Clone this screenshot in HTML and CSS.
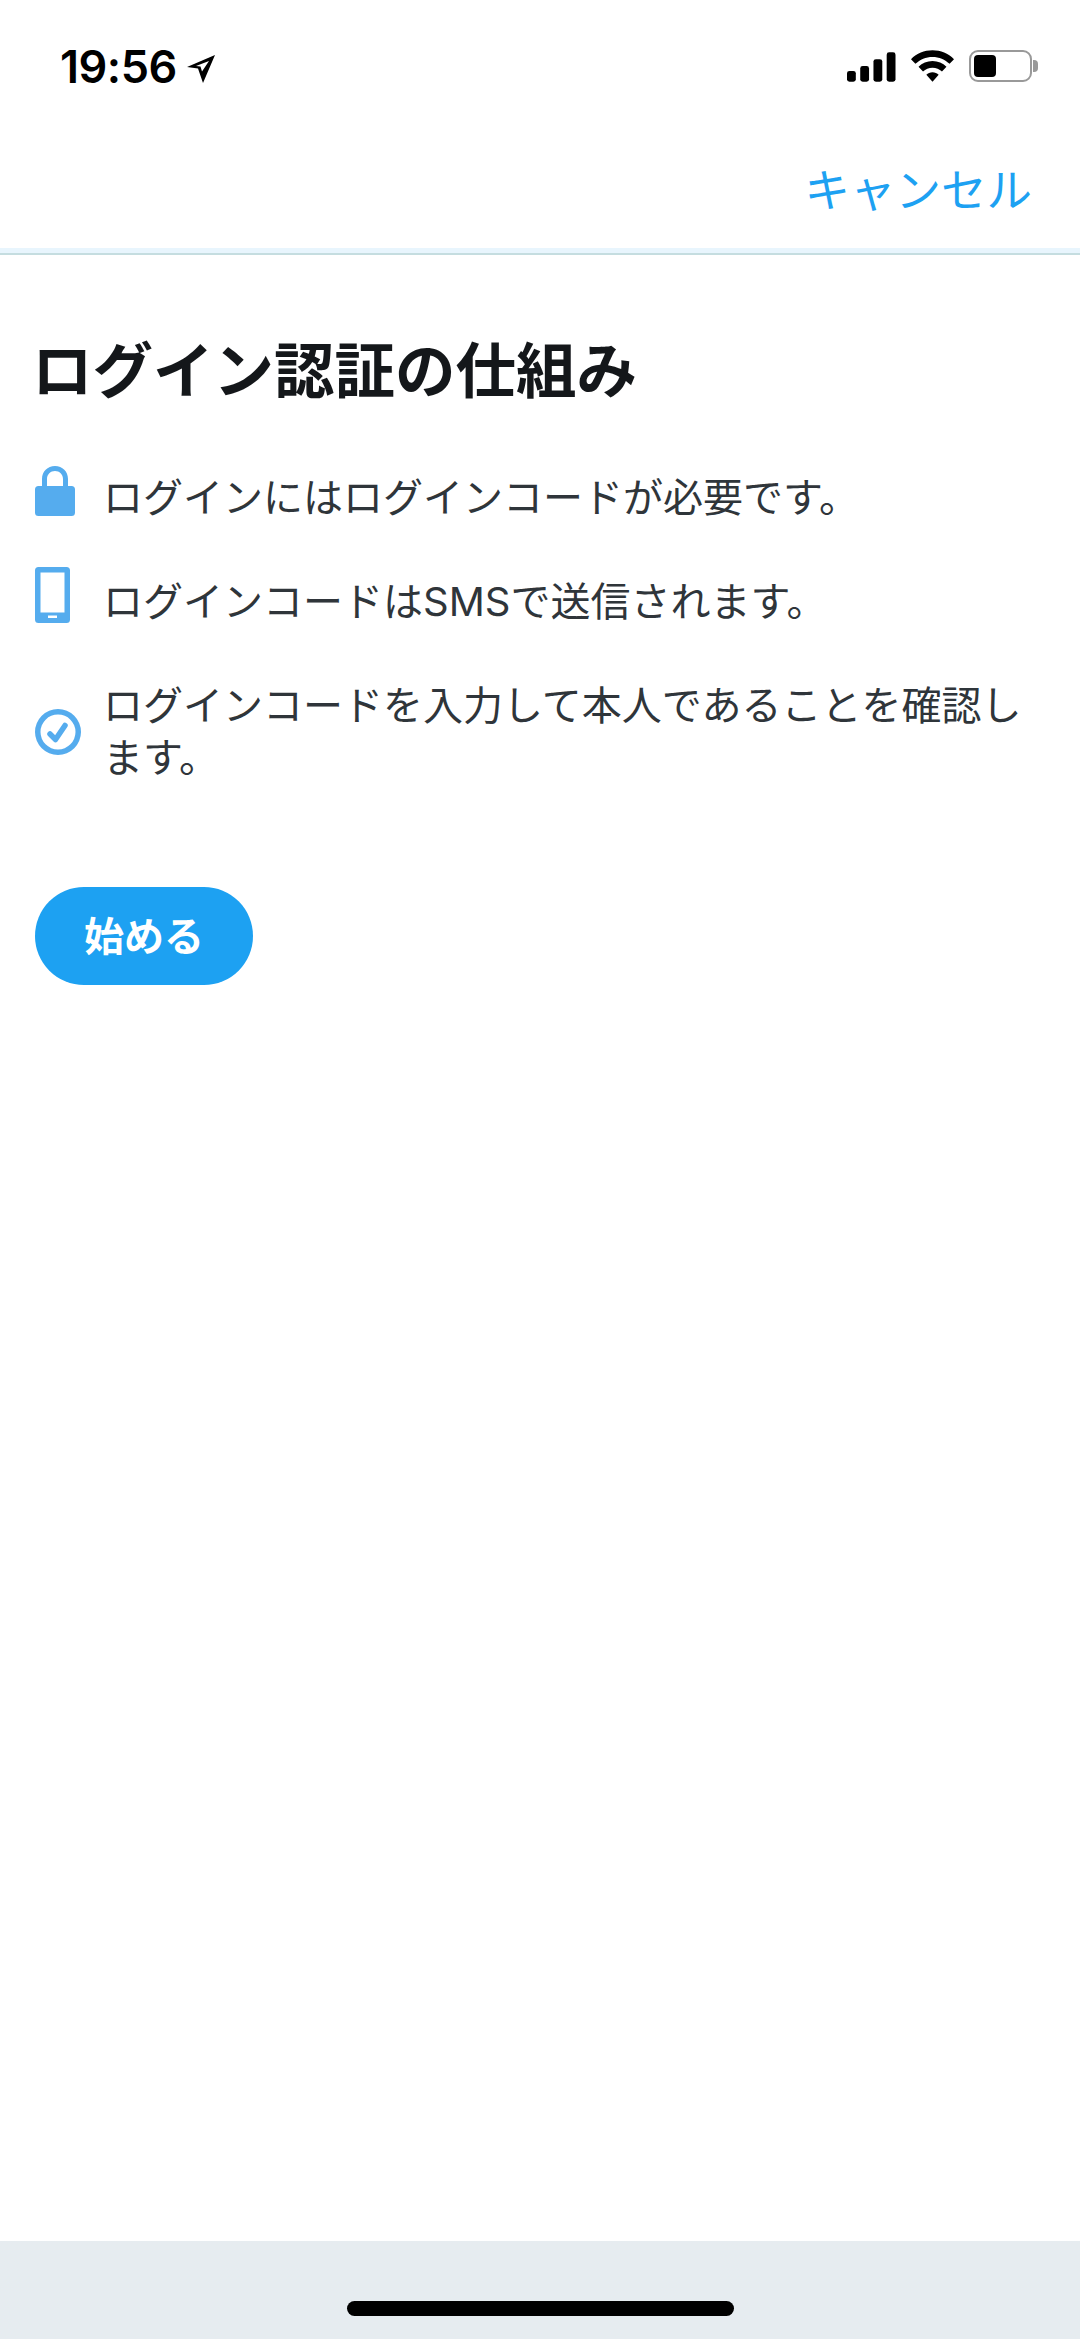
FILE: index.html
```html
<!DOCTYPE html>
<html lang="ja">
<head>
    <meta charset="UTF-8">
    <meta name="viewport" content="width=device-width, initial-scale=1.0">
    <title>ログイン認証の仕組み</title>
    <link rel="stylesheet" href="styles.css">
</head>
<body>
    <div class="status-bar">
        <div class="status-left">
            <span class="status-time">19:56</span>
            <svg class="location-icon" viewBox="0 0 30 30">
                <path d="M29 1 1 13 12 14.500 17 29Z M23 7 16 17.500 14.500 12.500 10 12Z" fill="#000" fill-rule="evenodd"/>
            </svg>
        </div>
        <div class="status-right">
            <svg class="signal-icon" viewBox="0 0 50 31">
                <rect x="0" y="20" width="9" height="11" rx="2.500"/>
                <rect x="13.500" y="15" width="9" height="16" rx="2.500"/>
                <rect x="27" y="8" width="9" height="23" rx="2.500"/>
                <rect x="40.500" y="1" width="9" height="30" rx="2.500"/>
            </svg>
            <svg class="wifi-icon" viewBox="0 0 44 32">
                <path d="M22 0C13.500 0 6 3.300 0 9l4.500 4.800C9.200 9.300 15.300 6.700 22 6.700s12.800 2.600 17.500 7.100L44 9C38 3.300 30.500 0 22 0Z"/>
                <path d="M22 11c-5.600 0-10.500 2.100-14.300 5.700l4.600 4.800c2.600-2.400 6-3.800 9.700-3.800s7.100 1.400 9.700 3.800l4.600-4.800C32.500 13.100 27.600 11 22 11Z"/>
                <path d="M22 22.500c-2.500 0-4.700.9-6.300 2.500L22 32l6.300-7c-1.600-1.600-3.800-2.500-6.300-2.500Z"/>
            </svg>
            <div class="battery">
                <div class="battery-body">
                    <div class="battery-level"></div>
                </div>
                <div class="battery-nub"></div>
            </div>
        </div>
    </div>

    <div class="nav-bar">
        <a class="cancel-link">キャンセル</a>
    </div>

    <div class="content">
        <h1 class="page-title">ログイン認証の仕組み</h1>

        <ul class="steps">
            <li class="step step-single">
                <svg class="step-icon" viewBox="0 0 46 50">
                    <path d="M20 0C12.500 0 7 5.500 7 13v7H3.500A3.500 3.500 0 0 0 0 23.500v23A3.500 3.500 0 0 0 3.500 50h33a3.500 3.500 0 0 0 3.500-3.500v-23a3.500 3.500 0 0 0-3.500-3.500H33v-7C33 5.500 27.500 0 20 0Zm0 5c4.500 0 8 3.500 8 8v7H12v-7c0-4.500 3.500-8 8-8Z" fill-rule="evenodd"/>
                </svg>
                <span class="step-text">ログインにはログインコードが必要です。</span>
            </li>
            <li class="step step-single">
                <svg class="step-icon" viewBox="0 0 46 56">
                    <path d="M3.500 0h28A3.500 3.500 0 0 1 35 3.500v49a3.500 3.500 0 0 1-3.500 3.500h-28A3.500 3.500 0 0 1 0 52.500v-49A3.500 3.500 0 0 1 3.500 0Zm2 5.500v40h24v-40ZM13 48.500v2.500h9v-2.500Z" fill-rule="evenodd"/>
                </svg>
                <span class="step-text">ログインコードはSMSで送信されます。</span>
            </li>
            <li class="step">
                <svg class="step-icon" viewBox="0 0 46 46">
                    <path d="M23 0a23 23 0 1 0 0 46 23 23 0 0 0 0-46Zm0 5.500a17.500 17.500 0 1 1 0 35 17.500 17.500 0 0 1 0-35Z" fill-rule="evenodd"/>
                    <path d="M15 25 20.500 30.500 30 16.500" fill="none" stroke="#55acee" stroke-width="5.500" stroke-linecap="round" stroke-linejoin="round"/>
                </svg>
                <span class="step-text">ログインコードを入力して本人であることを確認します。</span>
            </li>
        </ul>

        <button class="start-btn">始める</button>
    </div>

    <div class="home-bar">
        <div class="home-indicator"></div>
    </div>
</body>
</html>
```

FILE: styles.css
```css
* {
    margin: 0;
    padding: 0;
    box-sizing: border-box;
}

html, body {
    height: 100%;
}

body {
    font-family: Inter, 'Noto Sans CJK JP', sans-serif;
    background: white;
    display: flex;
    flex-direction: column;
}

/* Status bar */
.status-bar {
    height: 132px;
    padding: 50px 42px 0 60px;
    display: flex;
    justify-content: space-between;
    align-items: flex-start;
}

.status-left {
    display: flex;
    align-items: center;
    gap: 9px;
}

.status-time {
    font-size: 45px;
    font-weight: 600;
    line-height: 32px;
    letter-spacing: -0.5px;
    color: #000;
}

.location-icon {
    width: 30px;
    height: 30px;
    margin-top: 4px;
}

.status-right {
    display: flex;
    align-items: center;
    gap: 15px;
}

.signal-icon {
    width: 49px;
    height: 31px;
    fill: #000;
}

.wifi-icon {
    width: 43px;
    height: 32px;
    fill: #000;
}

.battery {
    display: flex;
    align-items: center;
}

.battery-body {
    width: 63px;
    height: 32px;
    padding: 3px;
    border: 2px solid #999;
    border-radius: 9px;
}

.battery-level {
    width: 22px;
    height: 100%;
    background: #000;
    border-radius: 4px;
}

.battery-nub {
    width: 5px;
    height: 12px;
    background: #999;
    border-radius: 0 4px 4px 0;
    margin-left: 1px;
}

/* Nav bar */
.nav-bar {
    height: 123px;
    padding: 0 48px 0 0;
    display: flex;
    justify-content: flex-end;
    align-items: flex-start;
    border-bottom: 2px solid #c5dde0;
    box-shadow: inset 0 -5px 0 #e8f5fd;
}

.cancel-link {
    font-size: 45.5px;
    line-height: 60px;
    margin-top: 29px;
    color: #1da1f2;
}

/* Content */
.content {
    flex: 1;
    padding: 74px 35px 0;
}

.page-title {
    font-size: 60.5px;
    font-weight: 700;
    line-height: 84px;
    color: #14171a;
    margin: 0 0 59px -3px;
}

.steps {
    list-style: none;
    display: flex;
    flex-direction: column;
    gap: 52px;
    margin-bottom: 103px;
}

.step {
    display: flex;
    align-items: center;
}

.step-icon {
    width: 46px;
    flex-shrink: 0;
    margin-right: 22px;
    fill: #55acee;
}

.step-single .step-icon {
    margin-top: -14px;
}

.step-text {
    font-size: 40px;
    line-height: 52px;
    color: #2f353a;
}

.start-btn {
    display: block;
    width: 218px;
    height: 98px;
    padding-bottom: 4px;
    border: none;
    border-radius: 49px;
    background: #1da1f2;
    color: white;
    font-family: inherit;
    font-size: 40px;
    font-weight: 700;
}

/* Home indicator area */
.home-bar {
    height: 98px;
    background: #e6ecf0;
    display: flex;
    justify-content: center;
    padding-top: 60px;
}

.home-indicator {
    width: 387px;
    height: 15px;
    background: #000;
    border-radius: 8px;
}
```
